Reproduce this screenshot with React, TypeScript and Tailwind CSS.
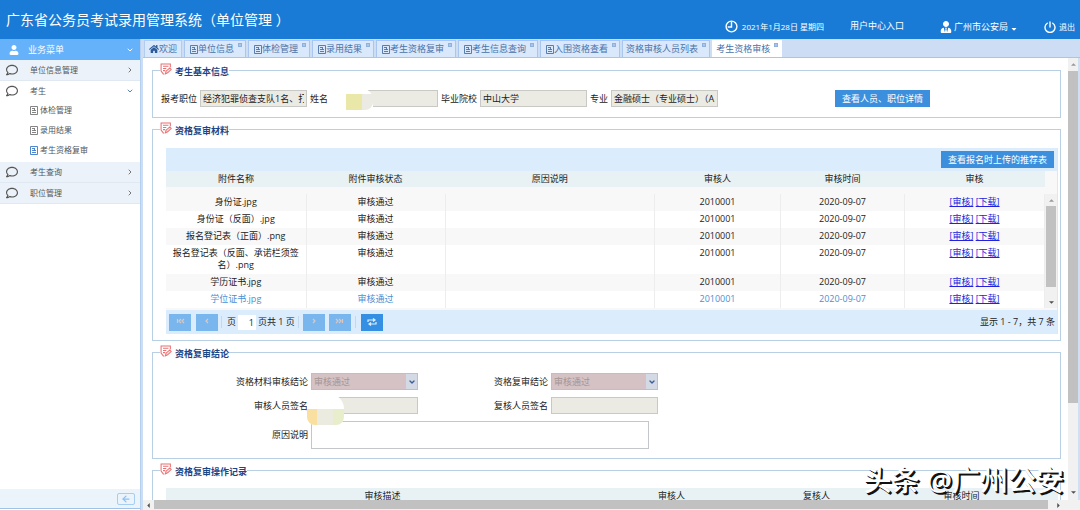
import type { ReactNode } from 'react'
import { ArrowLeft, ChevronDown, ChevronRight } from 'lucide-react'
import { FaCaretDown, FaHome, FaRegComment, FaUser, FaUserTie } from 'react-icons/fa'

const tabs = [
  { title: '单位信息', icon: true },
  { title: '体检管理', icon: true },
  { title: '录用结果', icon: true },
  { title: '考生资格复审', icon: true },
  { title: '考生信息查询', icon: true },
  { title: '入围资格查看', icon: true },
  { title: '资格审核人员列表', icon: false },
  { title: '考生资格审核', icon: false, active: true },
]

const menu = [
  { title: '单位信息管理' },
  { title: '考生', children: ['体检管理', '录用结果', '考生资格复审'] },
  { title: '考生查询' },
  { title: '职位管理' },
]

const files = [
  '身份证.jpg',
  '身份证（反面）.jpg',
  '报名登记表（正面）.png',
  '报名登记表（反面、承诺栏须签名）.png',
  '学历证书.jpg',
  '学位证书.jpg',
]

function DocIcon({ className }: { className?: string }) {
  return (
    <svg viewBox="0 0 8 9" className={className} fill="none" stroke="currentColor" strokeWidth="0.9">
      <path d="M0.500 0.500h7v8h-7z" />
      <path d="M2 2.500h2.500M2 4.500h4M2 6.500h4M4.500 2v3" />
    </svg>
  )
}

function NoteIcon() {
  return (
    <svg viewBox="0 0 22 22" className="size-3 shrink-0" fill="none" stroke="#ea7173" strokeWidth="1.9">
      <path d="M8 20H6l-4-5V2h17v6" />
      <path d="M5.500 6h10M5.500 10h6M5.500 14h4" />
      <path d="M10 20l1-5 7-6 2.500 3-6.500 6z" fill="#fbdcdc" />
    </svg>
  )
}

function ClockIcon() {
  return (
    <svg viewBox="0 0 24 24" className="size-[13px]" fill="none" stroke="currentColor" strokeWidth="2.600">
      <circle cx="12" cy="12" r="10" />
      <path d="M12 3v10H5" />
    </svg>
  )
}

function PowerIcon() {
  return (
    <svg viewBox="0 0 24 24" className="size-3" fill="none" stroke="currentColor" strokeWidth="2.800" strokeLinecap="round">
      <path d="M12 2v10M6.500 4.500a10 10 0 1 0 11 0" />
    </svg>
  )
}

function PageIcon({ d }: { d: string }) {
  return (
    <svg viewBox="0 0 10 8" className="h-2 w-2.5" fill="none" stroke="currentColor" strokeWidth="1.2">
      <path d={d} />
    </svg>
  )
}

function Arrow({ dir }: { dir: 'up' | 'down' | 'left' | 'right' }) {
  const paths = {
    up: 'M0 6l4-4 4 4z',
    down: 'M0 2l4 4 4-4z',
    left: 'M6 0L2 4l4 4z',
    right: 'M2 0l4 4-4 4z',
  }
  return (
    <svg viewBox="0 0 8 8" className="size-[5px]" fill={dir === 'up' ? '#999999' : '#505050'}>
      <path d={paths[dir]} />
    </svg>
  )
}

function Header() {
  return (
    <header className="flex h-[39px] shrink-0 items-center bg-[#1a7bd6] pl-1.5 pr-[5px] text-white">
      <h1 className="flex-1 text-[14px] leading-5">广东省公务员考试录用管理系统（单位管理 ）</h1>
      <div className="flex items-center pt-3.5 text-[9px] leading-3">
        <span className="flex items-center gap-1 text-[8px]">
          <ClockIcon />
          2021年1月28日 星期四
        </span>
        <a href="#" className="mb-0.5 ml-[26px]">用户中心入口</a>
        <button type="button" className="ml-9 flex items-center gap-0.5">
          <FaUserTie className="size-3" />
          广州市公安局
          <FaCaretDown className="mt-1 size-2" />
        </button>
        <button type="button" className="ml-[26px] flex items-center gap-[3px] text-[8px]">
          <PowerIcon />
          退出
        </button>
      </div>
    </header>
  )
}

function Sidebar() {
  return (
    <aside className="flex w-[141px] shrink-0 flex-col border-r border-[#b5d0ee] bg-white text-[8px] text-[#555555]">
      <div className="flex h-[21px] shrink-0 items-center bg-[#65b2fa] pl-[9px] pr-1.5 text-[9px] text-white">
        <FaUser className="size-[10px]" />
        <span className="ml-[9px] flex-1">业务菜单</span>
        <ChevronDown className="size-2" strokeWidth={3} />
      </div>
      <nav className="flex-1">
        {menu.map((item) => (
          <div key={item.title}>
            <a
              href="#"
              className={`flex h-[21px] items-center border-b pl-1.5 pr-1.5 ${
                item.children ? 'border-white bg-white' : 'border-[#e0e9f2] bg-[#ebf2f9]'
              }`}
            >
              <FaRegComment className="size-3 text-[#555555]" />
              <span className="ml-3 flex-1">{item.title}</span>
              {item.children ? (
                <ChevronDown className="size-2 text-[#5b86ad]" strokeWidth={3} />
              ) : (
                <ChevronRight className="size-2 text-[#777777]" strokeWidth={3} />
              )}
            </a>
            {item.children?.map((child, i) => (
              <a key={child} href="#" className="flex h-5 items-center gap-0.5 pb-1 pl-[30px]">
                <DocIcon className={i === 2 ? 'h-[9px] w-2 text-[#3c78c8]' : 'h-[9px] w-2 text-[#777777]'} />
                {child}
              </a>
            ))}
          </div>
        ))}
      </nav>
      <div className="mb-px flex h-5 shrink-0 items-center justify-end border-b border-[#9dc3e8] bg-[#ebf3fb] pr-[5px]">
        <button type="button" aria-label="收起菜单" className="flex h-3 w-[18px] items-center justify-center rounded-[2px] border border-[#a6cdf2] text-[#8fc1ef]">
          <ArrowLeft className="size-[10px]" strokeWidth={3} />
        </button>
      </div>
    </aside>
  )
}

function TabBar() {
  return (
    <div className="flex h-[19px] shrink-0 items-end border-b border-[#a9c6e8] bg-[#cddef4] pl-px text-[9px] leading-3 text-[#4a72a8]">
      <button type="button" className="mr-0.5 flex h-[17px] items-center border border-b-0 border-[#b3cdee] bg-[#d9e8fb] px-1">
        <FaHome className="size-[10px] text-[#2c5a98]" />
        欢迎
      </button>
      <div className="flex gap-0.5">
        {tabs.map((tab) => (
          <button
            key={tab.title}
            type="button"
            className={`flex h-[17px] items-center border border-b-0 px-[3px] whitespace-nowrap ${
              tab.active ? 'border-white bg-white' : 'border-[#a9c6ee] bg-[#d9e8fb]'
            }`}
          >
            {tab.icon && <DocIcon className="ml-0.5 h-[9px] w-2" />}
            {tab.title}
            <span className="mb-2 ml-1 size-1 border border-[#8fb1dc] bg-[#a9c5ea]" />
          </button>
        ))}
      </div>
    </div>
  )
}

function Group({ title, className, children }: { title: string; className: string; children: ReactNode }) {
  return (
    <fieldset className={`min-w-0 border border-[#b9cfe4] ${className}`}>
      <legend className="ml-[7px] flex h-3.5 gap-[3px] text-[9px] font-bold text-[#1c4587]">
        <NoteIcon />
        <span className="pt-[3px] leading-3">{title}</span>
      </legend>
      {children}
    </fieldset>
  )
}

const fieldClass = 'h-[17px] w-[107px] border border-[#c8c9c4] bg-[#ebebe4] px-0.5 text-[9px] text-[#222222]'

function BasicInfo() {
  return (
    <Group title="考生基本信息" className="h-[55px]">
      <div className="flex items-center gap-[3px] pl-2 pt-[13px]">
        <label htmlFor="post">报考职位</label>
        <input id="post" readOnly className={fieldClass} defaultValue="经济犯罪侦查支队1名、打" />
        <label htmlFor="name">姓名</label>
        <div className="relative flex">
          <input id="name" readOnly className={fieldClass} />
          {/* masked name */}
          <div className="absolute -left-px -top-0.5 flex h-7 w-[43px] items-end rounded-tr-xl bg-white pb-1.5 pl-4">
            <span className="h-4 w-[17px] bg-[#e9e8a8]" />
            <span className="h-4 w-[11px] rounded-br-lg bg-[#ebebe4]" />
          </div>
        </div>
        <label htmlFor="school">毕业院校</label>
        <input id="school" readOnly className={fieldClass} defaultValue="中山大学" />
        <label htmlFor="major">专业</label>
        <input id="major" readOnly className={fieldClass} defaultValue="金融硕士（专业硕士）（A" />
        <button type="button" className="ml-[114px] h-[17px] bg-[#3c8fdd] px-[7px] text-white">
          查看人员、职位详情
        </button>
      </div>
    </Group>
  )
}

function FileCols() {
  return (
    <colgroup>
      <col className="w-[140px]" />
      <col className="w-[139px]" />
      <col />
      <col className="w-[126px]" />
      <col className="w-[124px]" />
      <col className="w-[140px]" />
    </colgroup>
  )
}

const pagerButton = 'flex h-[17px] w-[22px] items-center justify-center'

function Materials() {
  return (
    <Group title="资格复审材料" className="mt-1 pb-1.5">
      <div className="ml-[13px] mr-0.5 mt-3 border-r border-[#dde8f3] bg-[#f8f8f8]">
        <div className="flex h-[23px] items-center justify-end bg-[#dbecfd] pr-[3px]">
          <button type="button" className="h-[17px] bg-[#3c8fdd] px-[7px] text-white">
            查看报名时上传的推荐表
          </button>
        </div>
        <div className="flex">
          <table className="w-0 flex-1 table-fixed border-collapse text-center leading-3">
            <FileCols />
            <thead>
              <tr className="h-4 bg-[#e8f1f3]">
                {['附件名称', '附件审核状态', '原因说明', '审核人', '审核时间', '审核'].map((h) => (
                  <th key={h} className="p-0 font-normal">{h}</th>
                ))}
              </tr>
              <tr className="h-[7px]" />
            </thead>
            <tbody>
              {files.map((file, i) => (
                <tr
                  key={file}
                  className={`align-top ${i % 2 === 0 ? 'bg-[#f8f8f8]' : 'bg-white'} ${
                    i === files.length - 1 ? 'text-[#4a90d6]' : ''
                  } *:border-r *:border-[#ededed] *:pb-[3px] *:pt-0.5`}
                >
                  <td className="px-1.5">{file}</td>
                  <td>审核通过</td>
                  <td />
                  <td>2010001</td>
                  <td>2020-09-07</td>
                  <td className="text-[#2222dd]">
                    <a href="#" className="underline">[审核]</a> <a href="#" className="underline">[下载]</a>
                  </td>
                </tr>
              ))}
            </tbody>
          </table>
          <div className="mt-[23px] flex w-3 flex-col items-center bg-[#f1f1f1]">
            <span className="flex h-3 items-center"><Arrow dir="up" /></span>
            <span className="mb-[5px] w-[10px] flex-1 bg-[#c1c1c1]" />
            <span className="mt-1 flex h-3 items-center"><Arrow dir="down" /></span>
          </div>
        </div>
        <div className="mt-0.5 flex h-6 items-center bg-[#dbecfd] pl-[3px] pr-0.5">
          <button type="button" aria-label="首页" className={`${pagerButton} bg-[#79b6ee] text-[#d9c9c5]`}>
            <PageIcon d="M2.500 1v4M6 1L4 3l2 2M9 1L7 3l2 2" />
          </button>
          <button type="button" aria-label="上一页" className={`${pagerButton} ml-[5px] bg-[#79b6ee] text-[#d9c9c5]`}>
            <PageIcon d="M6 1L4 3l2 2" />
          </button>
          <span className="ml-[3px] h-3 w-px bg-[#c5d9ee]" />
          <label htmlFor="page" className="ml-[5px]">页</label>
          <input id="page" className="mx-0.5 h-[15px] w-[18px] bg-white pr-0.5 text-right" defaultValue="1" />
          <span>页共 1 页</span>
          <span className="ml-[3px] h-3 w-px bg-[#c5d9ee]" />
          <button type="button" aria-label="下一页" className={`${pagerButton} ml-1 bg-[#79b6ee] text-[#d9c9c5]`}>
            <PageIcon d="M4 1l2 2-2 2" />
          </button>
          <button type="button" aria-label="末页" className={`${pagerButton} ml-1 bg-[#79b6ee] text-[#d9c9c5]`}>
            <PageIcon d="M1 1l2 2-2 2M4 1l2 2-2 2M7.500 1v4" />
          </button>
          <span className="ml-1 h-3 w-px bg-[#c5d9ee]" />
          <button type="button" aria-label="刷新" className={`${pagerButton} ml-[5px] bg-[#3590e3] text-[#e3effa]`}>
            <PageIcon d="M1 4V2h7M6 0.500L8 2 6 3.500M9 4v2H2M4 4.500L2 6l2 1.500" />
          </button>
          <span className="ml-auto">显示 1 - 7，共 7 条</span>
        </div>
      </div>
    </Group>
  )
}

function Combo({ id }: { id: string }) {
  return (
    <div className="flex h-[17px] w-[107px] border border-[#c4bcbf] bg-[#d5c2c4]">
      <select id={id} disabled className="w-0 flex-1 appearance-none bg-[#d5c2c4] px-0.5 text-[9px] text-[#a39596]">
        <option>审核通过</option>
      </select>
      <span className="flex w-[11px] items-center justify-center bg-[#d3dae6] text-[#3c5f95]">
        <ChevronDown className="size-2" strokeWidth={4} />
      </span>
    </div>
  )
}

function Conclusion() {
  return (
    <Group title="资格复审结论" className="mt-1 pb-[9px]">
      <div className="grid grid-cols-[155px_107px_127px_107px] items-center gap-x-[3px] gap-y-[7px] pt-3.5 *:[label]:text-right">
        <label htmlFor="material">资格材料审核结论</label>
        <Combo id="material" />
        <label htmlFor="review">资格复审结论</label>
        <Combo id="review" />
        <label htmlFor="signer">审核人员签名</label>
        <div className="relative flex">
          <input id="signer" readOnly className={fieldClass} />
          {/* masked signature */}
          <div className="absolute -left-1 -top-1 flex h-8 w-[37px] items-end rounded-tr-2xl rounded-b-lg bg-white">
            <span className="h-4 w-2.5 rounded-bl-lg bg-[#f9e0a0]" />
            <span className="h-4 w-4 bg-[#ebebe0]" />
            <span className="h-4 flex-1 rounded-br-lg bg-[#e8eecb]" />
          </div>
        </div>
        <label htmlFor="reviewer">复核人员签名</label>
        <input id="reviewer" readOnly className={fieldClass} />
        <label htmlFor="reason">原因说明</label>
        <textarea id="reason" className="col-span-3 block h-7 w-[338px] resize-none border border-[#c3c7cc] bg-white" />
      </div>
    </Group>
  )
}

function Records() {
  return (
    <Group title="资格复审操作记录" className="mt-1 pb-10">
      <div className="ml-[13px] mr-0.5 mt-[11px] bg-[#e8f1f3] pr-6">
        <table className="w-full table-fixed text-center leading-3">
          <thead>
            <tr className="h-4">
              <th className="p-0 font-normal">审核描述</th>
              <th className="w-[145px] p-0 font-normal">审核人</th>
              <th className="w-[145px] p-0 font-normal">复核人</th>
              <th className="w-[145px] p-0 font-normal">审核时间</th>
            </tr>
          </thead>
        </table>
      </div>
    </Group>
  )
}

export default function App() {
  return (
    <div className="relative flex h-screen flex-col overflow-hidden bg-white font-['Open_Sans','Noto_Sans_CJK_SC',sans-serif] text-[9px] leading-3 text-[#222222]">
      <Header />
      <div className="flex min-h-0 flex-1">
        <Sidebar />
        <div className="flex min-w-0 flex-1 flex-col border-l-2 border-[#cddef4]">
          <TabBar />
          <div className="flex min-h-0 flex-1 border-r-2 border-[#cfe0f5]">
            <main className="min-w-0 flex-1 overflow-hidden pl-[9px] pr-[7px] pt-[5px]">
              <BasicInfo />
              <Materials />
              <Conclusion />
              <Records />
            </main>
            <div className="flex w-[10px] flex-col items-center bg-[#f1f1f1]">
              <span className="flex h-[13px] items-center"><Arrow dir="up" /></span>
              <span className="h-3/4 w-[10px] bg-[#c1c1c1]" />
              <span className="mt-auto flex h-4 items-center"><Arrow dir="down" /></span>
            </div>
          </div>
          <div className="flex h-[10px] shrink-0 items-center bg-[#f1f1f1] pr-3">
            <span className="flex w-[11px] justify-center"><Arrow dir="left" /></span>
            <span className="mb-px h-[9px] flex-1 bg-[#c1c1c1]" />
            <span className="flex w-5 justify-center"><Arrow dir="right" /></span>
          </div>
        </div>
      </div>
      <div className="pointer-events-none absolute bottom-2.5 right-4 text-[28px] font-medium leading-10 text-white [text-shadow:2px_2px_0_#111111,1px_1px_0_#111111]">
        头条 @广州公安
      </div>
    </div>
  )
}
